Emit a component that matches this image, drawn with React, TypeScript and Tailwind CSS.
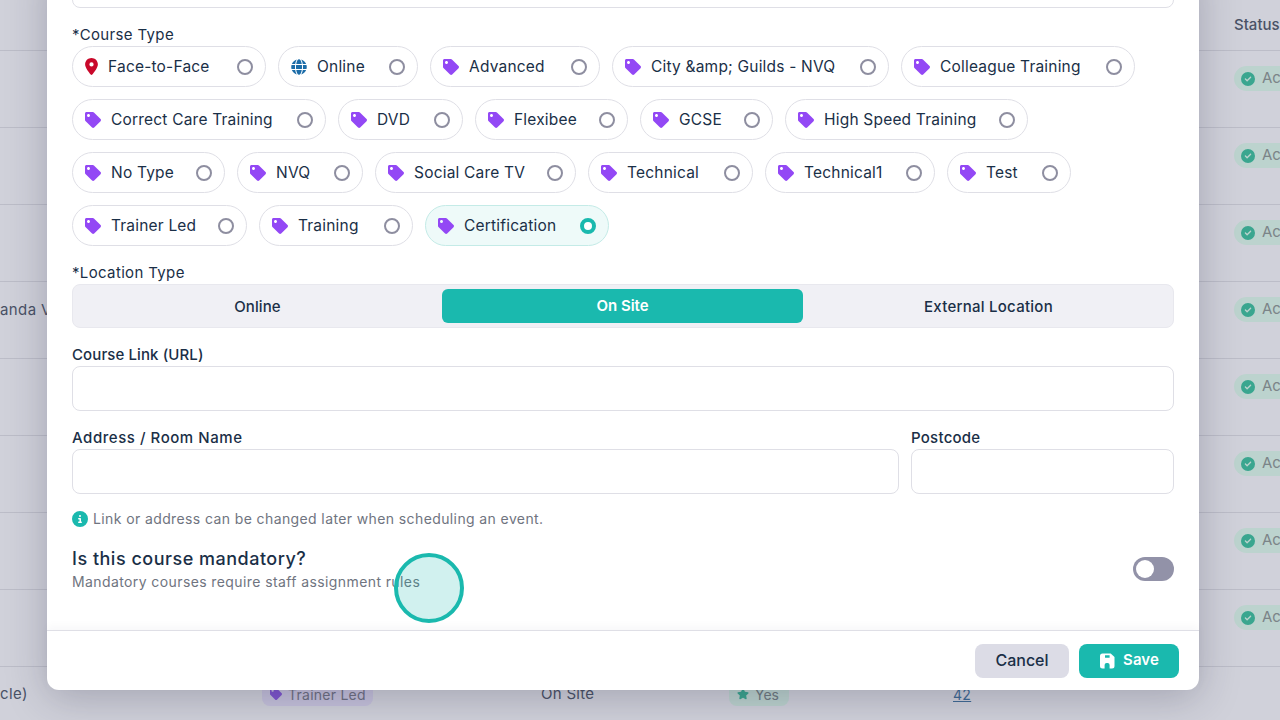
import { FaTag, FaGlobe, FaStar } from "react-icons/fa";
import { FaLocationDot, FaCircleInfo, FaCircleCheck } from "react-icons/fa6";

type Pill = { label: string; width: string; icon?: "pin" | "globe"; checked?: boolean };

const pillRows: Pill[][] = [
  [
    { label: "Face-to-Face", width: "w-[194px]", icon: "pin" },
    { label: "Online", width: "w-[140px]", icon: "globe" },
    { label: "Advanced", width: "w-[170px]" },
    { label: "City &amp; Guilds - NVQ", width: "w-[277px]" },
    { label: "Colleague Training", width: "w-[234px]" },
  ],
  [
    { label: "Correct Care Training", width: "w-[254px]" },
    { label: "DVD", width: "w-[125px]" },
    { label: "Flexibee", width: "w-[153px]" },
    { label: "GCSE", width: "w-[133px]" },
    { label: "High Speed Training", width: "w-[243px]" },
  ],
  [
    { label: "No Type", width: "w-[153px]" },
    { label: "NVQ", width: "w-[126px]" },
    { label: "Social Care TV", width: "w-[201px]" },
    { label: "Technical", width: "w-[165px]" },
    { label: "Technical1", width: "w-[170px]" },
    { label: "Test", width: "w-[124px]" },
  ],
  [
    { label: "Trainer Led", width: "w-[175px]" },
    { label: "Training", width: "w-[154px]" },
    { label: "Certification", width: "w-[184px]", checked: true },
  ],
];

const rowCount = [0, 1, 2, 3, 4, 5, 6, 7];

function SaveIcon() {
  return (
    <svg viewBox="0 0 16 16" className="h-4 w-4" fill="currentColor">
      <path
        fillRule="evenodd"
        d="M3.5 0.5h8.2l3.8 3.6v8.9a2.5 2.5 0 0 1-2.5 2.5h-9.5a2.5 2.5 0 0 1-2.5-2.5v-10a2.5 2.5 0 0 1 2.5-2.5zM6 2.2v2.6h4.6v-2.6zM5.6 15.5v-3.6a2 2 0 0 1 2-2h1a2 2 0 0 1 2 2v3.6z"
      />
    </svg>
  );
}

function PillOption({ pill }: { pill: Pill }) {
  return (
    <div
      className={`flex h-[41px] items-center rounded-full border px-3 ${pill.width} ${
        pill.checked ? "border-[#c4ebe7] bg-[#eefaf9]" : "border-[#dfdfe6] bg-white"
      }`}
    >
      {pill.icon === "pin" && <FaLocationDot className="mr-[10px] h-[17px] w-[13px] text-[#c9082a]" />}
      {pill.icon === "globe" && <FaGlobe className="mr-[10px] h-4 w-4 text-[#1b6ca8]" />}
      {!pill.icon && <FaTag className="mr-[10px] h-4 w-4 text-[#9348f5]" />}
      <span className="flex-1 truncate pt-px text-[15.5px] tracking-[0.2px] text-[#1a2f47]">{pill.label}</span>
      {pill.checked ? (
        <span className="h-4 w-4 rounded-full border-[4px] border-[#1ab9ae] bg-white" />
      ) : (
        <span className="h-4 w-4 rounded-full border-2 border-[#8e8ea0] bg-white" />
      )}
    </div>
  );
}

function BackgroundTable() {
  return (
    <div className="h-[720px] overflow-hidden bg-[#d0d1da]">
      <div className="flex h-[51px] items-center justify-end border-b border-[#bcbdc8]">
        <span className="w-[46px] overflow-hidden text-[15px] font-medium text-[#4a5266]">Status</span>
      </div>
      {rowCount.map((i) => (
        <div key={i} className="flex h-[77px] items-start justify-end border-b border-[#bcbdc8] pt-[15px]">
          <span className="flex h-[25px] w-[46px] items-center gap-[7px] rounded-l-full bg-[#bcd3ce] pl-[7px] text-[15px] text-[#7b8488]">
            <FaCircleCheck className="h-[14px] w-[14px] shrink-0 text-[#3aa68f]" />
            Ac
          </span>
        </div>
      ))}
    </div>
  );
}

export default function App() {
  return (
    <div className="relative h-[720px] w-[1280px] overflow-hidden font-['Inter',sans-serif] text-[#1a2f47]">
      <BackgroundTable />

      {/* row text peeking out from behind the modal */}
      <span className="absolute left-0 top-[299px] whitespace-nowrap text-[15px] tracking-[0.4px] text-[#4a5266]">anda V</span>
      <span className="absolute left-0 top-[683px] text-[15px] tracking-[0.4px] text-[#4a5266]">cle)</span>
      <div className="absolute left-[262px] top-[682px] flex h-[24px] w-[111px] items-center gap-1.5 rounded-lg bg-[#c6c2dc] pl-2 text-[14px] tracking-[0.25px] text-[#6f7082]">
        <FaTag className="h-3 w-3 text-[#7f55cf]" />
        Trainer Led
      </div>
      <span className="absolute left-[541px] top-[683px] text-[15px] tracking-[0.3px] text-[#4a5266]">On Site</span>
      <div className="absolute left-[729px] top-[682px] flex h-[24px] w-[60px] items-center gap-1.5 rounded-lg bg-[#bcd3ce] pl-2 text-[14px] text-[#6f7a80]">
        <FaStar className="h-3 w-3 text-[#3aa68f]" />
        Yes
      </div>
      <span className="absolute left-[953px] top-[684px] text-[14px] tracking-[0.3px] text-[#3f6a94] underline">42</span>

      {/* modal, pinned to the bottom and cut off at the top */}
      <div className="absolute inset-0 flex flex-col justify-end pb-[30px] pl-[47px] pr-[81px]">
        <div className="flex shrink-0 flex-col rounded-b-xl bg-white shadow-[0_8px_40px_rgba(30,30,60,0.25)]">
          <div className="flex flex-col px-[25px]">
            <div className="mb-[17px] h-[48px] rounded-lg border border-[#dfdfe6]" />
            <label className="mb-px text-[15px] leading-[20px] tracking-[0.35px]">*Course Type</label>
            <div className="flex flex-col gap-3">
              {pillRows.map((row, i) => (
                <div key={i} className="flex gap-3">
                  {row.map((pill) => (
                    <PillOption key={pill.label} pill={pill} />
                  ))}
                </div>
              ))}
            </div>

            <label className="mb-px mt-[17px] text-[15px] leading-[20px] tracking-[0.35px]">*Location Type</label>
            <div className="flex h-[44px] items-center rounded-lg border border-[#e8e8ee] bg-[#f0f0f5]">
              <span className="flex-1 pt-[2px] text-center text-[15px] font-medium tracking-[0.1px]">Online</span>
              <span className="mr-px flex h-[34px] w-[361px] items-center justify-center rounded-md bg-[#1ab9ae] pt-px text-[15px] font-semibold text-white">
                On Site
              </span>
              <span className="flex-1 pt-[2px] text-center text-[15px] font-medium tracking-[0.25px]">External Location</span>
            </div>

            <label className="mb-px mt-[17px] text-[15px] font-medium leading-[20px] tracking-[0.1px]">Course Link (URL)</label>
            <div className="h-[45px] rounded-lg border border-[#dfdfe6]" />

            <div className="mt-[17px] flex gap-3">
              <div className="flex flex-1 flex-col">
                <label className="mb-px text-[15px] font-medium leading-[20px] tracking-[0.55px]">Address / Room Name</label>
                <div className="h-[45px] rounded-lg border border-[#dfdfe6]" />
              </div>
              <div className="flex w-[263px] flex-col">
                <label className="mb-px text-[15px] font-medium leading-[20px] tracking-[0.25px]">Postcode</label>
                <div className="h-[45px] rounded-lg border border-[#dfdfe6]" />
              </div>
            </div>

            <p className="mt-4 flex items-center gap-[5px] text-[14px] leading-[18px] tracking-[0.39px] text-[#6f7480]">
              <FaCircleInfo className="h-4 w-4 text-[#1ab9ae]" />
              Link or address can be changed later when scheduling an event.
            </p>

            <div className="mt-[19px] flex h-[83px] items-start justify-between">
              <div>
                <p className="text-[18px] font-medium leading-[24px] tracking-[0.5px]">Is this course mandatory?</p>
                <p className="text-[14px] leading-[22px] tracking-[0.4px] text-[#6f7480]">Mandatory courses require staff assignment rules</p>
              </div>
              <span className="mt-[10px] flex h-6 w-[41px] items-center rounded-full bg-[#9292a8] px-[3px]">
                <span className="h-[18px] w-[18px] rounded-full bg-white" />
              </span>
            </div>
          </div>

          <div className="flex h-[60px] items-center justify-end gap-[10px] border-t border-[#dfdfe6] pr-5 shadow-[0_-4px_8px_rgba(30,30,60,0.03)]">
            <button className="h-[34px] w-[94px] rounded-lg bg-[#dcdce6] pb-0.5 text-[16px] font-medium text-[#1a2f47]">Cancel</button>
            <button className="flex h-[34px] w-[100px] items-center justify-center gap-2 rounded-lg bg-[#1ab9ae] text-[15px] font-semibold tracking-[0.1px] text-white">
              <SaveIcon />
              Save
            </button>
          </div>
        </div>
      </div>

      {/* click highlight */}
      <span className="absolute left-[394px] top-[553px] h-[70px] w-[70px] rounded-full border-[4px] border-[#1ab9ae] bg-[#1ab9ae]/20" />
    </div>
  );
}
